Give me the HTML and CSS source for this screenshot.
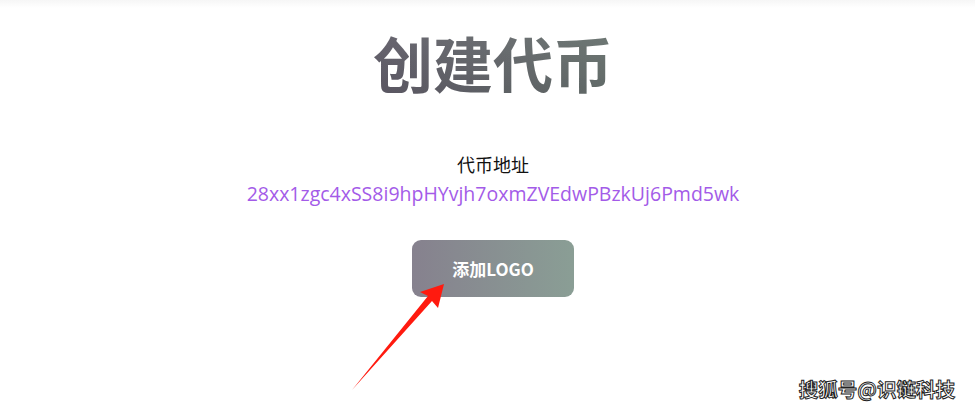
FILE: index.html
```html
<!DOCTYPE html>
<html lang="zh-CN">
<head>
<meta charset="utf-8">
<meta name="viewport" content="width=device-width,initial-scale=1">
<title>创建代币</title>
<link rel="stylesheet" href="styles.css">
</head>
<body>
<div class="page">
  <h1 class="title">创建代币</h1>

  <div class="addr">
    <div class="addr-label">代币地址</div>
    <div class="addr-value">28xx1zgc4xSS8i9hpHYvjh7oxmZVEdwPBzkUj6Pmd5wk</div>
  </div>

  <div class="actions">
    <button type="button" class="btn-logo">添加LOGO</button>
    <!-- annotation arrow -->
    <svg class="arrow" width="100" height="110" viewBox="0 0 100 110" aria-hidden="true">
      <path d="M2 108 L78 14 L70 10 L94 2 L88 26 L82 19 Z" fill="#ff1a0f"/>
    </svg>
  </div>
</div>
<div class="mark">搜狐号@识链科技</div>
</body>
</html>
```

FILE: styles.css
```css
:root{--txt:#111;--purple:#a35be8}
*{box-sizing:border-box}
body{margin:0;background:#fff;color:var(--txt);font-family:"Noto Sans CJK SC","Noto Sans",sans-serif;height:413px;overflow:hidden;position:relative}
body::before{content:"";position:absolute;left:0;right:0;top:0;height:8px;background:linear-gradient(#f6f6f6,#fff)}
.page{display:flex;flex-direction:column;align-items:center;padding:19px 0 0 11px}
.title{margin:0;font-size:60px;font-weight:700;line-height:86px;background:linear-gradient(180deg,rgba(255,255,255,.08),rgba(30,20,40,.12)),linear-gradient(90deg,#5f5c67,#67726d);-webkit-background-clip:text;background-clip:text;color:transparent}
.addr{margin-top:44px;text-align:center}
.addr-label{font-size:18px;line-height:30px;font-weight:400}
.addr-value{font-size:19.5px;line-height:30px;color:var(--purple);font-family:"Open Sans","Noto Sans",sans-serif;font-weight:500}
.actions{position:relative;margin-top:31px}
.btn-logo{appearance:none;border:0;border-radius:9px;width:162px;height:57px;color:#fff;font-size:17px;font-weight:700;font-family:"Noto Sans CJK SC","Noto Sans",sans-serif;background:linear-gradient(90deg,#86818e,#8a9e95);cursor:pointer}
.arrow{position:absolute;left:-62px;top:42px}
.mark{position:absolute;right:20px;bottom:10px;font-size:19.5px;font-weight:700;color:#fff;-webkit-text-stroke:1px #222}
```
